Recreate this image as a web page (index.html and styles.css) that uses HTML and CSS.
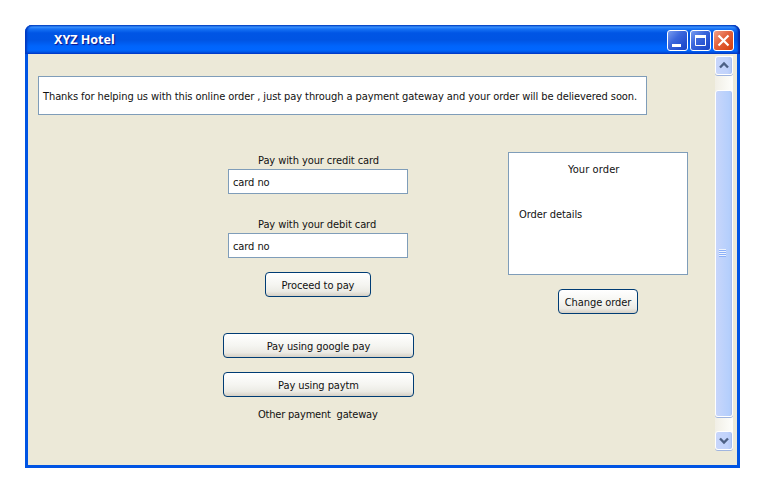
FILE: index.html
```html
<!DOCTYPE html>
<html lang="en">
<head>
<meta charset="utf-8">
<title>XYZ Hotel</title>
<link rel="stylesheet" href="styles.css">
</head>
<body>
<main class="window">
  <header class="titlebar">
    <h1 class="title">XYZ Hotel</h1>
    <div class="controls">
      <span class="control"><svg width="21" height="21" viewBox="0 0 21 21"><path d="M5 15.5h9" stroke="#fff" stroke-width="3"/></svg></span>
      <span class="control"><svg width="21" height="21" viewBox="0 0 21 21" fill="none" stroke="#fff"><path d="M5.5 5.5h10v10h-10z"/><path d="M5 6.5h11" stroke-width="3"/></svg></span>
      <span class="control close"><svg width="21" height="21" viewBox="0 0 21 21"><path d="M5.5 5.5l10 10M15.500 5.500l-10 10" stroke="#fff" stroke-width="2.200"/></svg></span>
    </div>
  </header>
  <div class="client">
    <div class="page">
      <p class="notice">Thanks for helping us with this online order , just pay through a payment gateway and your order will be delievered soon.</p>
      <div class="columns">
        <section class="payment">
          <p class="label">Pay with your credit card</p>
          <div class="field">card no</div>
          <p class="label second">Pay with your debit card</p>
          <div class="field">card no</div>
          <div class="button proceed">Proceed to pay</div>
          <div class="button google">Pay using google pay</div>
          <div class="button paytm">Pay using paytm</div>
          <p class="label other">Other payment&nbsp; gateway</p>
        </section>
        <section class="order">
          <div class="summary">
            <p class="heading">Your order</p>
            <p class="details">Order details</p>
          </div>
          <div class="button change">Change order</div>
        </section>
      </div>
    </div>
    <div class="scrollbar">
      <span class="arrow"><svg width="16" height="17" viewBox="0 0 16 17" fill="none" stroke="#4d6185" stroke-width="2.4"><path d="M4 10.500l4-4 4 4"/></svg></span>
      <span class="thumb"><i class="grip"></i></span>
      <span class="arrow"><svg width="16" height="17" viewBox="0 0 16 17" fill="none" stroke="#4d6185" stroke-width="2.4"><path d="M4 6.500l4 4 4-4"/></svg></span>
    </div>
  </div>
</main>
</body>
</html>
```
FILE: styles.css
```css
* { box-sizing: border-box; }
body {
  margin: 0;
  padding: 25px;
  background: #fff;
  color: #111;
  font: 11px/14px "DejaVu Sans Condensed", "DejaVu Sans", sans-serif;
  letter-spacing: -0.085px;
  overflow: hidden;
}
h1, p { margin: 0; font-weight: normal; white-space: nowrap; }
svg { display: block; }
.window {
  width: 715px;
  height: 443px;
  display: flex;
  flex-direction: column;
  background: #0054e3;
  border-radius: 7px 7px 0 0;
}
.titlebar {
  height: 29px;
  flex: none;
  display: flex;
  align-items: center;
  justify-content: space-between;
  padding: 0 6px 0 29px;
  border-radius: 7px 7px 0 0;
  background: linear-gradient(#0351d0 0, #3b91fd 2px, #1672f5 4px, #0055e5 8px, #0054e3 15px, #0064fb 21px, #0066ff 25px, #0058e6 27px, #003dd7 29px);
  box-shadow: inset 2px 0 2px #0039c0, inset -2px 0 2px #0026a8;
}
.title {
  color: #fff;
  font: bold 12.5px/16px "Noto Sans", sans-serif;
  letter-spacing: 0;
  text-shadow: 1px 1px 1px #0f1089;
}
.controls { display: flex; gap: 2px; padding-top: 2px; }
.control {
  width: 21px;
  height: 21px;
  border: 1px solid #fff;
  border-radius: 3px;
  background: linear-gradient(135deg, #7a9df0 0, #3c67dc 40%, #2450d0 75%, #1b46c4 100%);
}
.control svg { margin: -1px; }
.close { background: linear-gradient(135deg, #f1a08a 0, #e2613c 45%, #d63d0c 100%); }
.client {
  flex: 1;
  margin: 0 3px 3px;
  display: flex;
  justify-content: space-between;
  padding: 2px 4px 15px 10px;
  background: #ece9d8;
}
.page { padding-top: 20px; }
.notice {
  width: 609px;
  height: 39px;
  padding: 13px 4px 11px;
  border: 1px solid #7f9db9;
  background: #fff;
}
.columns { display: flex; gap: 94px; padding: 37px 0 0 185px; }
.payment { width: 191px; display: flex; flex-direction: column; align-items: center; }
.label { align-self: flex-start; margin: 2px 0 1px 35px; }
.second { margin-top: 24px; }
.field {
  align-self: flex-start;
  margin-left: 5px;
  width: 180px;
  height: 25px;
  padding: 6px 4px 4px;
  border: 1px solid #7f9db9;
  background: #fff;
}
.button {
  width: 191px;
  height: 25px;
  padding-top: 6px;
  text-align: center;
  white-space: nowrap;
  border: 1px solid #003c74;
  border-radius: 4px;
  background: linear-gradient(#fff 0, #f5f5f1 50%, #ecebe5 80%, #d6d0c5 100%);
}
.proceed { align-self: flex-start; width: 106px; margin: 14px 0 0 42px; }
.google { margin-top: 36px; }
.paytm { margin-top: 14px; }
.other { margin-top: 11px; letter-spacing: -0.2px; }
.order { display: flex; flex-direction: column; align-items: center; gap: 14px; }
.summary {
  width: 180px;
  height: 123px;
  padding: 10px 10px 0;
  border: 1px solid #7f9db9;
  background: #fff;
}
.heading { padding-left: 49px; letter-spacing: 0.1px; }
.details { margin-top: 31px; }
.change { width: 80px; }
.scrollbar {
  width: 18px;
  display: flex;
  flex-direction: column;
  justify-content: space-between;
  background: linear-gradient(90deg, #f1efe6, #fefefb);
}
.arrow, .thumb {
  border: 1px solid #fff;
  border-radius: 3px;
  box-shadow: 0 1px 0 #a0b5df, inset -1px 0 0 #a6bff2;
  background: linear-gradient(90deg, #c8d6fb, #c1d3fb 70%, #b4c8f6);
}
.arrow { width: 18px; height: 19px; }
.thumb {
  height: 327px;
  display: flex;
  align-items: center;
  justify-content: center;
  background: linear-gradient(90deg, #c8d6fb, #b5cffc 80%, #b0c9f8);
}
.grip {
  width: 7px;
  height: 8px;
  margin-right: 3px;
  background: repeating-linear-gradient(#eef4fe 0 1px, #8cb0f8 1px 2px);
}
```
